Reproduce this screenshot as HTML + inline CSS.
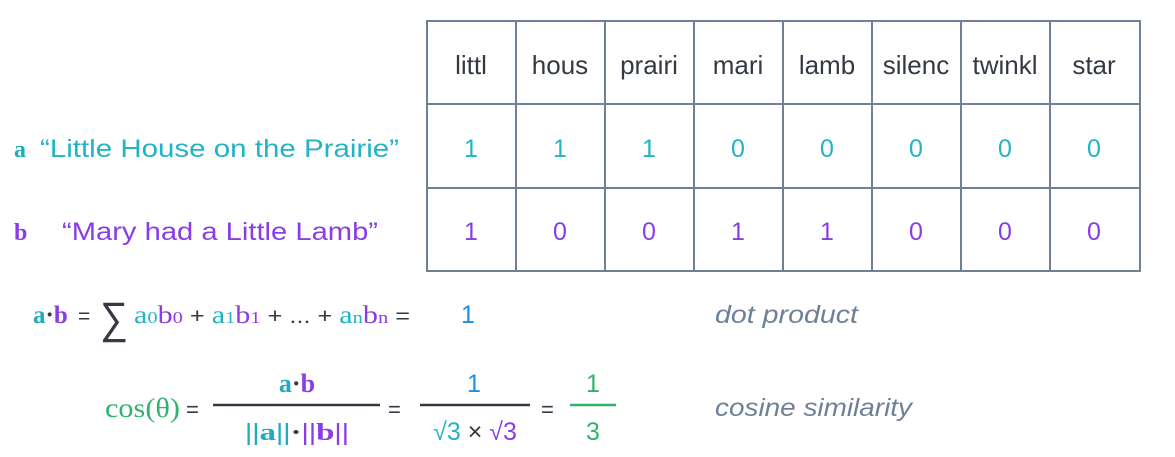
<!DOCTYPE html>
<html><head><meta charset="utf-8"><style>
html,body{margin:0;padding:0;background:#fff;width:1175px;height:457px;overflow:hidden}
svg{display:block}
.s{font-family:"Liberation Sans","DejaVu Sans",sans-serif}
.r{font-family:"Liberation Serif","DejaVu Serif",serif}
</style></head><body>
<svg width="1175" height="457" xmlns="http://www.w3.org/2000/svg">
<g stroke="#6f8097" stroke-width="2" fill="none">
<rect x="427" y="21" width="713" height="250"/>
<line x1="427" y1="104" x2="1140" y2="104"/>
<line x1="427" y1="188" x2="1140" y2="188"/>
<line x1="516" y1="21" x2="516" y2="271"/>
<line x1="605" y1="21" x2="605" y2="271"/>
<line x1="694" y1="21" x2="694" y2="271"/>
<line x1="783" y1="21" x2="783" y2="271"/>
<line x1="872" y1="21" x2="872" y2="271"/>
<line x1="961" y1="21" x2="961" y2="271"/>
<line x1="1050" y1="21" x2="1050" y2="271"/>
</g>
<g class="s" font-size="26" fill="#343a44" text-anchor="middle">
<text x="471" y="74">littl</text><text x="560" y="74">hous</text><text x="649" y="74">prairi</text><text x="738" y="74">mari</text><text x="827" y="74">lamb</text><text x="916" y="74">silenc</text><text x="1005" y="74">twinkl</text><text x="1094" y="74">star</text>
</g>
<g class="s" font-size="25" fill="#22b3c4" text-anchor="middle">
<text x="471" y="157">1</text><text x="560" y="157">1</text><text x="649" y="157">1</text><text x="738" y="157">0</text><text x="827" y="157">0</text><text x="916" y="157">0</text><text x="1005" y="157">0</text><text x="1094" y="157">0</text>
</g>
<g class="s" font-size="25" fill="#8a3de6" text-anchor="middle">
<text x="471" y="240">1</text><text x="560" y="240">0</text><text x="649" y="240">0</text><text x="738" y="240">1</text><text x="827" y="240">1</text><text x="916" y="240">0</text><text x="1005" y="240">0</text><text x="1094" y="240">0</text>
</g>
<text class="r" x="14" y="157" font-size="24" font-weight="bold" fill="#1fadbd">a</text>
<text class="s" x="40" y="157" font-size="25" fill="#22b3c4" textLength="359" lengthAdjust="spacingAndGlyphs">“Little House on the Prairie”</text>
<text class="r" x="14" y="240" font-size="24" font-weight="bold" fill="#8a3de6">b</text>
<text class="s" x="62" y="240" font-size="25" fill="#8a3de6" textLength="316" lengthAdjust="spacingAndGlyphs">“Mary had a Little Lamb”</text>
<text class="r" x="33" y="323" font-size="25" font-weight="bold"><tspan fill="#1fadbd">a</tspan><tspan fill="#343a44">·</tspan><tspan fill="#8a3de6">b</tspan></text>
<text class="s" x="78" y="323" font-size="21" fill="#343a44">=</text>
<text class="s" x="100" y="333" font-size="44" fill="#343a44" textLength="28" lengthAdjust="spacingAndGlyphs">∑</text>
<text class="r" x="134" y="323" font-size="25" textLength="276" lengthAdjust="spacingAndGlyphs"><tspan fill="#22b3c4">a</tspan><tspan fill="#22b3c4" font-size="17">0</tspan><tspan fill="#8a3de6">b</tspan><tspan fill="#8a3de6" font-size="17">0</tspan><tspan fill="#343a44" class="s" font-size="21"> + </tspan><tspan fill="#22b3c4">a</tspan><tspan fill="#22b3c4" font-size="17">1</tspan><tspan fill="#8a3de6">b</tspan><tspan fill="#8a3de6" font-size="17">1</tspan><tspan fill="#343a44" class="s" font-size="21"> + ... + </tspan><tspan fill="#22b3c4">a</tspan><tspan fill="#22b3c4" font-size="17">n</tspan><tspan fill="#8a3de6">b</tspan><tspan fill="#8a3de6" font-size="17">n</tspan><tspan fill="#343a44" class="s" font-size="21"> =</tspan></text>
<text class="s" x="468" y="323" font-size="25" fill="#1e8fe6" text-anchor="middle">1</text>
<text class="s" x="715" y="323" font-size="25" font-style="italic" fill="#6f8097" textLength="143" lengthAdjust="spacingAndGlyphs">dot product</text>
<text class="r" x="105" y="417" font-size="27" fill="#2fb36e" textLength="75" lengthAdjust="spacingAndGlyphs">cos(θ)</text>
<text class="s" x="186" y="417" font-size="22" fill="#343a44">=</text>
<line x1="213" y1="405" x2="380" y2="405" stroke="#343a44" stroke-width="2.5"/>
<text class="r" x="297" y="392" font-size="26" font-weight="bold" text-anchor="middle"><tspan fill="#1fadbd">a</tspan><tspan fill="#343a44">·</tspan><tspan fill="#8a3de6">b</tspan></text>
<text class="r" x="245" y="440" font-size="24" font-weight="bold" textLength="104" lengthAdjust="spacingAndGlyphs"><tspan fill="#1fadbd">||a||</tspan><tspan fill="#343a44">·</tspan><tspan fill="#8a3de6">||b||</tspan></text>
<text class="s" x="388" y="417" font-size="22" fill="#343a44">=</text>
<line x1="420" y1="405" x2="530" y2="405" stroke="#343a44" stroke-width="2.5"/>
<text class="s" x="474" y="392" font-size="25" fill="#1e8fe6" text-anchor="middle">1</text>
<text class="s" x="475" y="440" font-size="25" text-anchor="middle"><tspan fill="#22b3c4">√3</tspan><tspan fill="#343a44"> × </tspan><tspan fill="#8a3de6">√3</tspan></text>
<text class="s" x="541" y="417" font-size="22" fill="#343a44">=</text>
<line x1="570" y1="405" x2="616" y2="405" stroke="#2fb36e" stroke-width="2.5"/>
<text class="s" x="593" y="392" font-size="25" fill="#2fb36e" text-anchor="middle">1</text>
<text class="s" x="593" y="440" font-size="25" fill="#2fb36e" text-anchor="middle">3</text>
<text class="s" x="715" y="416" font-size="25" font-style="italic" fill="#6f8097" textLength="197" lengthAdjust="spacingAndGlyphs">cosine similarity</text>
</svg>
</body></html>
